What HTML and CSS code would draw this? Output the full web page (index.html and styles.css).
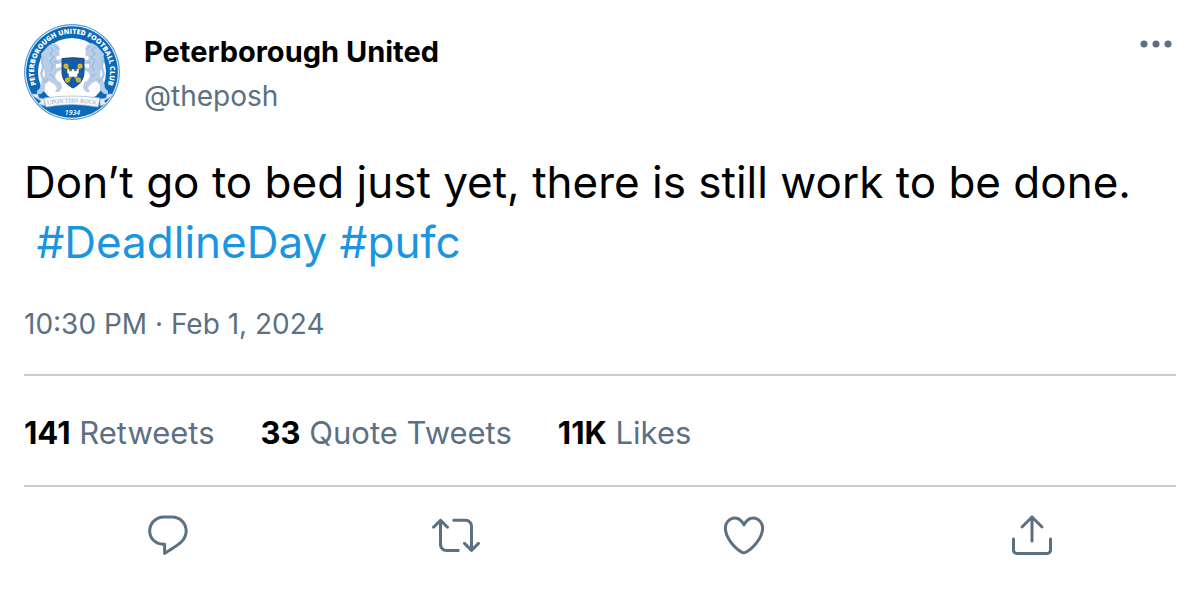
FILE: index.html
```html
<!DOCTYPE html>
<html lang="en">
<head>
    <meta charset="UTF-8">
    <meta name="viewport" content="width=device-width, initial-scale=1.0">
    <title>Peterborough United</title>
    <link rel="stylesheet" href="styles.css">
</head>
<body>

<article class="tweet">
    <header class="tweet-header">
        <a href="#" class="avatar" aria-label="Peterborough United">
            <svg viewBox="0 0 96 96">
                <defs>
                    <path id="ring" d="M12.2 60.5 A38 38 0 1 1 83.8 60.5"/>
                </defs>
                <circle cx="48" cy="48" r="48" fill="#5f9fd3"/>
                <circle cx="48" cy="48" r="46.8" fill="#e3effa"/>
                <circle cx="48" cy="48" r="45.8" fill="#0a69b8"/>
                <circle cx="48" cy="48" r="34" fill="#fff"/>
                <path d="M13 70 Q48 80 83 70 L78 80 Q48 102 18 80z" fill="#0a69b8"/>
                <text class="crest-name"><textPath href="#ring" startOffset="50%">PETERBOROUGH UNITED FOOTBALL CLUB</textPath></text>
                <!-- lions -->
                <g id="lion">
                    <path d="M24 22 l5-3 5 2 2 4 -1 3 1 3 -4 2 1 3 5-1 1 3 -4 2 -3 0 0 4 5-1 1 3 -5 2 -2 4 2 4 4 3 1 5 -3 4 h-4 l2-4 -3-4 -5-3 -4 4 0 5 -4 4 h-4 l0-3 3-3 1-6 4-6 -1-8 -2-7 -1-7z" fill="#b7cde8"/>
                    <path d="M26 23 l3 3 -3 4 4 3 -4 4 3 5 -2 5 M31 22 l3 3 M30 38 l4 0 M26 50 l4 3 M20 58 l4-3" fill="none" stroke="#86a9d2" stroke-width=".8"/>
                    <path d="M20 56 q-4-5-2-9 q2-5 0-9 q-1-3 1-5" fill="none" stroke="#aac4e3" stroke-width="2.200" stroke-linecap="round"/>
                </g>
                <use href="#lion" transform="matrix(-1 0 0 1 97 0)"/>
                <!-- shield -->
                <path d="M38 34.500 Q49 33 60 34.500 V48 C60 56 55 61 49 64 C43 61 38 56 38 48z" fill="#125bad" stroke="#24416c" stroke-width="1"/>
                <g fill="none" stroke="#d9bb2b" stroke-width="2">
                    <path d="M41 42 L54 56 M57 42 L44 56"/>
                    <circle cx="42" cy="42" r="1.500"/>
                    <circle cx="56" cy="42" r="1.500"/>
                    <circle cx="43.500" cy="56" r="1.500"/>
                    <circle cx="54.500" cy="56" r="1.500"/>
                </g>
                <path d="M43 45 h2.500 v2 h2 v-2 h3 v2 h2 v-2 H55 v4 l-1.500 1 v3 h-9 v-3 L43 49z" fill="#fff" stroke="#2b3d50" stroke-width=".4"/>
                <!-- ribbon -->
                <path d="M9 72 q-2-1-1-2 h6 l1 4 6 1 v7 l-7-2 3-3z M88 72 q2-1 1-2 h-6 l-1 4 -6 1 v7 l7-2 -3-3z" fill="#e1ebf6" stroke="#7fa5d0" stroke-width=".7"/>
                <path d="M20 74 Q48 70 76 74 L74 83 Q48 78 22 83z" fill="#f7faff" stroke="#9db8d6" stroke-width=".7"/>
                <path id="motto" d="M22 81 Q48 76 74 81" fill="none"/>
                <text class="crest-motto"><textPath href="#motto" startOffset="50%">UPON THIS ROCK</textPath></text>
                <text class="crest-year" x="48.500" y="91">1934</text>
            </svg>
        </a>
        <div class="author">
            <a href="#" class="author-name">Peterborough United</a>
            <a href="#" class="author-handle">@theposh</a>
        </div>
        <button type="button" class="more-button" aria-label="More">
            <svg viewBox="0 0 32 8">
                <circle cx="4" cy="4" r="3.500"/>
                <circle cx="16" cy="4" r="3.500"/>
                <circle cx="28" cy="4" r="3.500"/>
            </svg>
        </button>
    </header>

    <div class="tweet-text">
        <p>Don’t go to bed just yet, there is still work to be done.</p>
        <p> <a href="#">#DeadlineDay</a> <a href="#">#pufc</a></p>
    </div>

    <a href="#" class="tweet-time"><time datetime="2024-02-01T22:30">10:30 PM · Feb 1, 2024</time></a>

    <div class="stats">
        <a href="#"><strong>141</strong> Retweets</a>
        <a href="#"><strong>33</strong> Quote Tweets</a>
        <a href="#"><strong>11K</strong> Likes</a>
    </div>

    <div class="actions">
        <button type="button" aria-label="Reply">
            <svg viewBox="0 0 24 24"><path d="M14.046 2.242l-4.148-.01h-.002c-4.374 0-7.8 3.427-7.8 7.802 0 4.098 3.186 7.206 7.465 7.37v3.828c0 .108.044.286.12.403.142.225.384.347.632.347.138 0 .277-.038.402-.118.264-.168 6.473-4.14 8.088-5.506 1.902-1.61 3.04-3.97 3.043-6.312v-.017c-.006-4.367-3.43-7.787-7.8-7.788zm3.787 12.972c-1.134.96-4.862 3.405-6.772 4.643V16.67c0-.414-.335-.75-.75-.75h-.396c-3.66 0-6.318-2.476-6.318-5.886 0-3.534 2.768-6.302 6.3-6.302l4.147.01h.002c3.532 0 6.3 2.766 6.302 6.296-.003 1.91-.942 3.844-2.514 5.176z"/></svg>
        </button>
        <button type="button" aria-label="Retweet">
            <svg viewBox="0 0 24 24"><path d="M23.77 15.67c-.292-.293-.767-.293-1.06 0l-2.22 2.22V7.65c0-2.068-1.683-3.75-3.75-3.75h-5.85c-.414 0-.75.336-.75.75s.336.75.75.75h5.85c1.24 0 2.25 1.01 2.25 2.25v10.24l-2.22-2.22c-.293-.293-.768-.293-1.06 0s-.294.768 0 1.06l3.5 3.5c.145.147.337.22.53.22s.383-.072.53-.22l3.5-3.5c.294-.292.294-.767 0-1.06zm-10.66 3.28H7.26c-1.24 0-2.25-1.01-2.25-2.25V6.46l2.22 2.22c.148.147.34.22.532.22s.384-.073.53-.22c.293-.293.293-.768 0-1.06l-3.5-3.5c-.293-.294-.768-.294-1.06 0l-3.5 3.5c-.294.292-.294.767 0 1.06s.767.293 1.06 0l2.22-2.22V16.7c0 2.068 1.683 3.75 3.75 3.75h5.85c.414 0 .75-.336.75-.75s-.337-.75-.75-.75z"/></svg>
        </button>
        <button type="button" aria-label="Like">
            <svg viewBox="0 0 24 24"><path d="M12 21.638h-.014C9.403 21.59 1.95 14.856 1.95 8.478c0-3.064 2.525-5.754 5.403-5.754 2.29 0 3.83 1.58 4.646 2.73.814-1.148 2.354-2.73 4.645-2.73 2.88 0 5.404 2.69 5.404 5.755 0 6.376-7.454 13.11-10.037 13.157H12zM7.354 4.225c-2.08 0-3.903 1.988-3.903 4.255 0 5.74 7.034 11.596 8.55 11.658 1.518-.062 8.55-5.917 8.55-11.658 0-2.267-1.823-4.255-3.903-4.255-2.528 0-3.94 2.936-3.952 2.965-.23.562-1.156.562-1.387 0-.014-.03-1.425-2.965-3.954-2.965z"/></svg>
        </button>
        <button type="button" aria-label="Share">
            <svg viewBox="0 0 24 24"><path d="M17.53 7.47l-5-5c-.293-.293-.768-.293-1.06 0l-5 5c-.294.293-.294.768 0 1.06s.767.294 1.06 0l3.72-3.72V15c0 .414.336.75.75.75s.75-.336.75-.75V4.81l3.72 3.72c.146.147.338.22.53.22s.384-.072.53-.22c.293-.293.293-.767 0-1.06z"/><path d="M19.708 21.944H4.292C3.028 21.944 2 20.916 2 19.652V14c0-.414.336-.75.75-.75s.75.336.75.75v5.652c0 .437.355.792.792.792h15.416c.437 0 .792-.355.792-.792V14c0-.414.336-.75.75-.75s.75.336.75.75v5.652c0 1.264-1.028 2.292-2.292 2.292z"/></svg>
        </button>
    </div>
</article>

</body>
</html>
```
FILE: styles.css
```css
body {
    margin: 0;
    background-color: #fff;
    color: #000;
    font-family: Inter, "Liberation Sans", sans-serif;
    font-size: 28px;
    line-height: 40px;
}
a {
    color: #5b7083;
    text-decoration: none;
}
button {
    padding: 0;
    background: none;
    border: none;
    cursor: pointer;
}
svg {
    display: block;
    fill: #5b7083;
}
.tweet {
    padding: 24px;
}
.tweet-header {
    display: flex;
    align-items: flex-start;
    gap: 24px;
}
.avatar {
    width: 96px;
}
.crest-name,
.crest-year {
    font-family: "Open Sans", sans-serif;
    font-size: 7px;
    font-weight: 800;
    fill: #fff;
    text-anchor: middle;
}
.crest-year {
    font-style: italic;
    font-weight: 600;
}
.crest-motto {
    font-family: "Liberation Serif", serif;
    font-size: 6px;
    fill: #8aa6c6;
    text-anchor: middle;
}
.author {
    display: flex;
    flex: 1;
    flex-direction: column;
    gap: 4px;
    padding-top: 8px;
}
.author a {
    align-self: flex-start;
}
.author .author-name {
    color: #000;
    font-size: 29px;
    font-weight: 700;
}
.more-button {
    padding: 16px 4px;
}
.more-button svg {
    width: 32px;
}
.tweet-text {
    margin: 32px 0;
    font-size: 44px;
    line-height: 60px;
}
.tweet-text p {
    margin: 0;
    white-space: pre-wrap;
}
.tweet-text a {
    color: #1b95e0;
}
.tweet-time {
    display: block;
}
.stats {
    display: flex;
    flex-wrap: wrap;
    gap: 46px;
    margin-top: 30px;
    padding: 37px 0 32px;
    border: solid #c4cfd6;
    border-width: 2px 0;
    font-size: 31px;
}
.stats strong {
    color: #000;
}
.actions {
    display: grid;
    grid-template-columns: repeat(4, 1fr);
    justify-items: center;
    padding: 24px 0;
}
.actions svg {
    width: 48px;
}
```
